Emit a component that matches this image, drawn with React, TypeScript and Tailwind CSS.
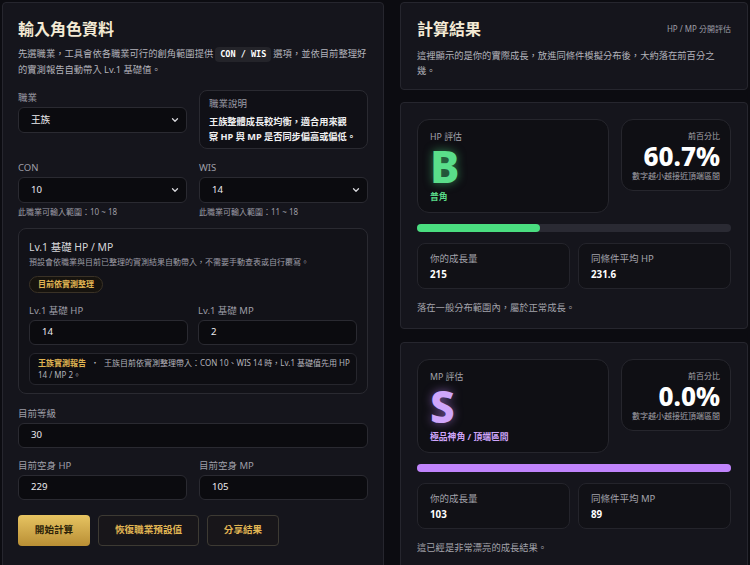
import React from 'react';
import { ChevronDown } from 'lucide-react';

const font = { fontFamily: '"Noto Sans", "Noto Sans CJK TC", sans-serif' };

const Label: React.FC<{ children: React.ReactNode }> = ({ children }) => (
  <div className="text-[9.5px] leading-4 text-[#9d9da6]">{children}</div>
);

const SelectBox: React.FC<{ value: string }> = ({ value }) => (
  <div className="mt-px flex h-[26px] items-center justify-between rounded-md border border-[#2a2a31] bg-[#0b0b0f] pl-3 pr-1.5 text-[9.6px] text-[#ececef]">
    <span>{value}</span>
    <ChevronDown size={10} strokeWidth={3} className="text-[#d8d8dc]" />
  </div>
);

const InputBox: React.FC<{ value: string }> = ({ value }) => (
  <div className="mt-px flex h-[25px] items-center rounded-md border border-[#2a2a31] bg-[#0b0b0f] px-3 text-[9.6px] text-[#ececef]">
    {value}
  </div>
);

const LeftPanel: React.FC = () => (
  <section className="flex flex-col rounded-sm border border-[#26262e] bg-[#15151c] px-[15px] pt-3 pb-4">
    <h1 className="text-[16px] font-bold leading-7 text-[#f3ead5]">輸入角色資料</h1>
    <p className="mt-[3px] text-[9.3px] leading-4 text-[#b3b3bb]">
      先選職業，工具會依各職業可行的創角範圍提供
      <code className="mx-[2px] inline-block rounded bg-[#24242a] px-[5px] py-px font-['DejaVu_Sans_Mono',monospace] text-[8.5px] font-bold leading-[13px] text-white">
        CON / WIS
      </code>
      選項，並依目前整理好
      <br />
      的實測報告自動帶入 Lv.1 基礎值。
    </p>

    <div className="mt-3 grid grid-cols-2 gap-3">
      <div>
        <Label>職業</Label>
        <SelectBox value="王族" />
      </div>
      <div className="rounded-lg border border-[#2a2a31] bg-[#101016] pl-[9px] pr-1 pt-[6px] pb-[4px]">
        <div className="text-[9.5px] leading-[14px] text-[#9d9da6]">職業說明</div>
        <div className="mt-[3px] whitespace-nowrap text-[9.2px] font-bold leading-[15px] text-[#f0f0f2]">
          王族整體成長較均衡，適合用來觀
          <br />
          察 HP 與 MP 是否同步偏高或偏低。
        </div>
      </div>
    </div>

    <div className="mt-[11px] grid grid-cols-2 gap-3">
      <div>
        <Label>CON</Label>
        <SelectBox value="10" />
        <div className="mt-[2px] text-[8px] leading-[14px] text-[#9d9da6]">此職業可輸入範圍：10 ~ 18</div>
      </div>
      <div>
        <Label>WIS</Label>
        <SelectBox value="14" />
        <div className="mt-[2px] text-[8px] leading-[14px] text-[#9d9da6]">此職業可輸入範圍：11 ~ 18</div>
      </div>
    </div>

    <div className="mt-[9px] rounded-lg border border-[#2a2a31] bg-[#121218] px-[10px] pt-[10px] pb-[8px]">
      <div className="text-[10.4px] leading-4 text-[#d6d6da]">Lv.1 基礎 HP / MP</div>
      <div className="text-[8px] leading-[14px] text-[#9d9da6]">
        預設會依職業與目前已整理的實測結果自動帶入，不需要手動查表或自行覆寫。
      </div>
      <div className="mt-[5px] inline-flex h-[17px] items-center rounded-full border border-[#3a3226] bg-[#16130e] px-2 text-[8px] font-bold text-[#e0b553]">
        目前依實測整理
      </div>
      <div className="mt-[10px] grid grid-cols-2 gap-[10px]">
        <div>
          <Label>Lv.1 基礎 HP</Label>
          <InputBox value="14" />
        </div>
        <div>
          <Label>Lv.1 基礎 MP</Label>
          <InputBox value="2" />
        </div>
      </div>
      <div className="mt-2 rounded-md border border-[#26262d] bg-[#0d0d12] px-[8px] py-[3px] text-[8px] leading-[12px] text-[#b3b3bb]">
        <span className="whitespace-nowrap">
          <span className="font-bold text-[#e0b553]">王族實測報告</span>
          <span className="mx-[5px]">・</span>
          王族目前依實測整理帶入：CON 10、WIS 14 時，Lv.1 基礎值先用 HP
        </span>
        <br />
        14 / MP 2。
      </div>
    </div>

    <div className="mt-3">
      <Label>目前等級</Label>
      <InputBox value="30" />
    </div>

    <div className="mt-[10px] grid grid-cols-2 gap-3">
      <div>
        <Label>目前空身 HP</Label>
        <InputBox value="229" />
      </div>
      <div>
        <Label>目前空身 MP</Label>
        <InputBox value="105" />
      </div>
    </div>

    <div className="mt-[15px] flex gap-2">
      <button className="h-[31px] w-[72px] rounded-sm bg-gradient-to-b from-[#e7c462] to-[#b98f34] text-[9.6px] font-bold text-[#2b1f08]">
        開始計算
      </button>
      <button className="h-[31px] w-[101px] rounded-sm border border-[#3d3a33] bg-[#18161a] text-[9.6px] font-bold text-[#e0b553]">
        恢復職業預設值
      </button>
      <button className="h-[31px] w-[72px] rounded-sm border border-[#3d3a33] bg-[#18161a] text-[9.6px] font-bold text-[#e0b553]">
        分享結果
      </button>
    </div>
  </section>
);

type ResultProps = {
  kind: string;
  grade: string;
  gradeColor: string;
  glow: string;
  tier: string;
  percent: string;
  fill: number;
  barColor: string;
  growth: string;
  avgLabel: string;
  avg: string;
  note: string;
};

const ResultCard: React.FC<ResultProps> = (p) => (
  <section className="rounded-sm border border-[#26262e] bg-[#15151c] px-4 pt-4 pb-[11px]">
    <div className="grid grid-cols-[1fr_110px] items-start gap-3">
      <div className="rounded-xl border border-[#26262d] bg-[#0f0f14] px-3 pt-[10px] pb-[8px]">
        <div className="text-[8.8px] leading-[14px] text-[#a3a3ab]">{p.kind} 評估</div>
        <div className={`mt-[4px] text-[44px] font-extrabold leading-[36px] ${p.gradeColor} ${p.glow}`}>{p.grade}</div>
        <div className={`mt-[6px] text-[8.8px] font-bold leading-[14px] ${p.gradeColor}`}>{p.tier}</div>
      </div>
      <div className="rounded-xl border border-[#26262d] bg-[#0f0f14] px-[10px] pt-[9px] pb-[7px] text-right">
        <div className="text-[8px] leading-[14px] text-[#a3a3ab]">前百分比</div>
        <div className="mt-[1.5px] text-[26px] font-extrabold leading-[22px] text-white">{p.percent}</div>
        <div className="mt-[2.5px] whitespace-nowrap text-[8px] leading-[14px] text-[#a3a3ab]">數字越小越接近頂端區間</div>
      </div>
    </div>

    <div className="mt-[11px] h-2 rounded-full bg-[#2a2a33]">
      <div className={`h-2 rounded-full ${p.barColor}`} style={{ width: `${p.fill}%` }} />
    </div>

    <div className="mt-[11px] grid grid-cols-2 gap-2">
      <div className="rounded-lg border border-[#24242b] bg-[#111116] px-3 pt-[7px] pb-[5px]">
        <div className="text-[9.5px] leading-4 text-[#a3a3ab]">你的成長量</div>
        <div className="text-[9.8px] font-bold leading-4 text-white">{p.growth}</div>
      </div>
      <div className="rounded-lg border border-[#24242b] bg-[#111116] px-3 pt-[7px] pb-[5px]">
        <div className="text-[9.5px] leading-4 text-[#a3a3ab]">{p.avgLabel}</div>
        <div className="text-[9.8px] font-bold leading-4 text-white">{p.avg}</div>
      </div>
    </div>

    <p className="mt-[10px] text-[9.3px] leading-[18px] text-[#a3a3ab]">{p.note}</p>
  </section>
);

const App: React.FC = () => {
  return (
    <div style={font} className="min-h-[565px] bg-[#0c0c11] p-0.5">
      <div className="grid grid-cols-[382px_1fr] gap-4">
        <LeftPanel />
        <div className="flex flex-col">
          <section className="rounded-sm border border-[#26262e] bg-[#15151c] px-4 pt-3 pb-[11px]">
            <div className="flex items-center justify-between">
              <h2 className="text-[16px] font-bold leading-7 text-[#f3ead5]">計算結果</h2>
              <span className="text-[8px] text-[#9d9da6]">HP / MP 分開評估</span>
            </div>
            <p className="mt-[5px] text-[9.3px] leading-[15px] text-[#b3b3bb]">
              這裡顯示的是你的實際成長，放進同條件模擬分布後，大約落在前百分之
              <br />
              幾。
            </p>
          </section>

          <div className="mt-3">
            <ResultCard
              kind="HP"
              grade="B"
              gradeColor="text-[#5ade8a]"
              glow="[text-shadow:0_0_10px_rgba(74,222,128,0.55)]"
              tier="普角"
              percent="60.7%"
              fill={39.3}
              barColor="bg-[#4ade80]"
              growth="215"
              avgLabel="同條件平均 HP"
              avg="231.6"
              note="落在一般分布範圍內，屬於正常成長。"
            />
          </div>

          <div className="mt-[13px]">
            <ResultCard
              kind="MP"
              grade="S"
              gradeColor="text-[#cfa6fb]"
              glow="[text-shadow:0_0_10px_rgba(192,132,252,0.55)]"
              tier="極品神角 / 頂端區間"
              percent="0.0%"
              fill={100}
              barColor="bg-[#c084fc]"
              growth="103"
              avgLabel="同條件平均 MP"
              avg="89"
              note="這已經是非常漂亮的成長結果。"
            />
          </div>
        </div>
      </div>
    </div>
  );
};

export default App;
